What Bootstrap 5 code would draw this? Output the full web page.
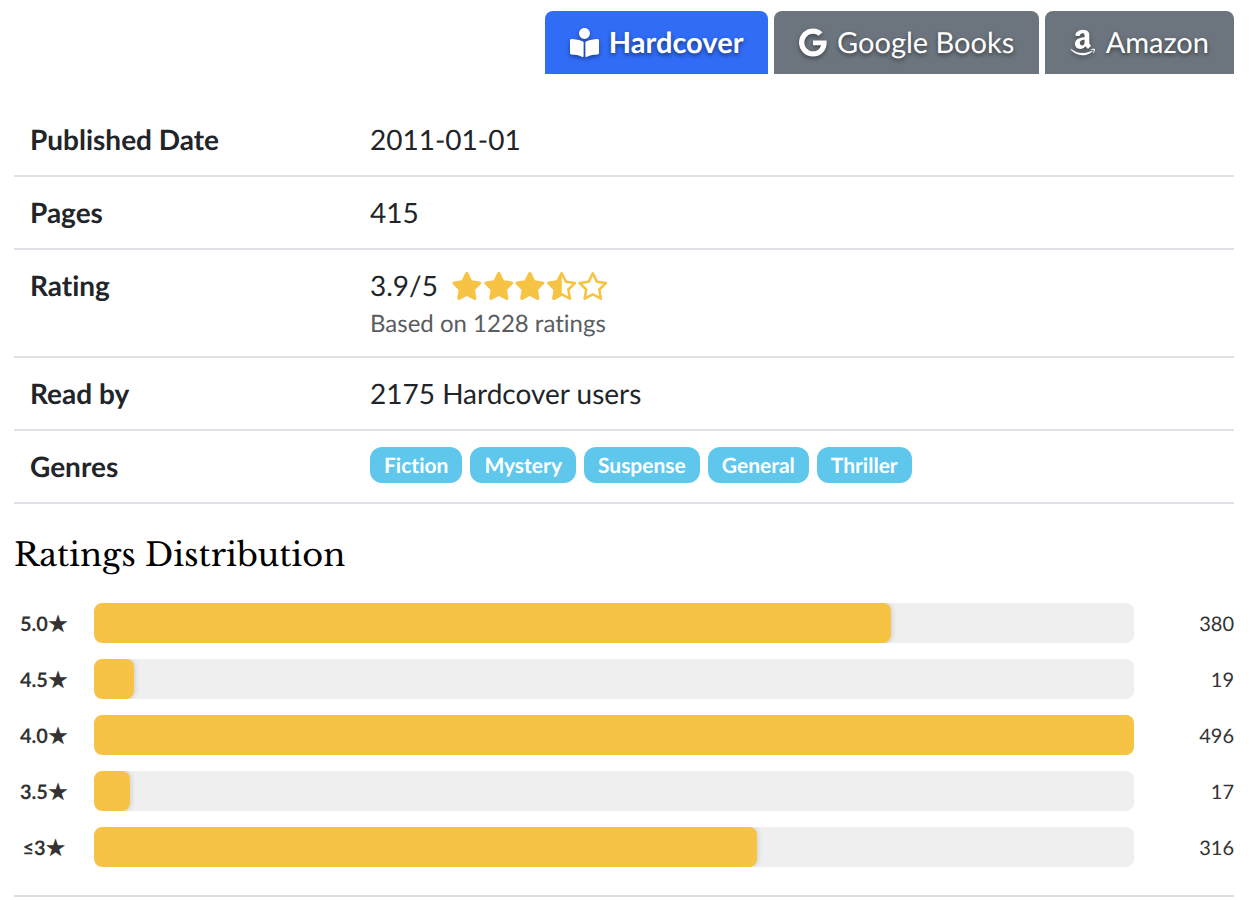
<!DOCTYPE html>
<html lang="en">
<head>
<meta charset="utf-8">
<meta name="viewport" content="width=device-width, initial-scale=1">
<title>Book details</title>
<link href="https://cdn.jsdelivr.net/npm/bootstrap@5.3.0/dist/css/bootstrap.min.css" rel="stylesheet">
<style>
  body { font-family: Lato, sans-serif; font-size: 28px; line-height: 39px; color: #212529; font-variant-ligatures: none; text-rendering: geometricPrecision; }
  .book-info { padding: 11px 22px 0 14px; }
  .source-tabs { gap: 6px; margin-bottom: 30px; }
  .source-tabs .nav-link {
    display: flex; align-items: center; gap: 10px;
    height: 63px; padding: 0 25px 1px;
    border-radius: 8px 8px 0 0;
    background: #6c757d; color: #fff; font-size: 29px;
    text-shadow: 0 2px 4px rgba(0,0,0,.5);
  }
  .source-tabs .nav-link.active { background: #306cf6; font-weight: 700; }
  .source-tabs svg { height: 29px; fill: #fff; filter: drop-shadow(0 2px 2px rgba(0,0,0,.4)); }
  .details-table > tbody > tr > * { padding: 16px; border-bottom: 2px solid #dee2e6; font-weight: 400; }
  .details-table > tbody > tr > th { width: 340px; font-weight: 700; }
  .star-icons { width: 158px; margin-left: 13px; }
  .star-icons svg { flex: 1 1 0; min-width: 0; height: 28px; fill: #f6c344; }
  .rating-note { font-size: 24px; line-height: 33px; padding-top: 2px; color: #5a5d60; }
  .genre-tag { background: #5fc7ec; font-size: 21px; line-height: 34px; padding: 2px 14px 0; border-radius: 12px; }
  .dist-title { font-family: "Libre Baskerville", "Liberation Serif", serif; font-size: 32px; font-weight: 400; line-height: 46px; color: #000; margin: 28px 0 25px; }
  .dist-row { height: 40px; gap: 20px; font-size: 20px; color: #333; }
  .dist-label { width: 60px; font-weight: 700; font-family: Lato, "Noto Sans CJK JP", sans-serif; line-height: 38px; padding-top: 2px; }
  .dist-track { height: 40px; border-radius: 8px; background: #efefef; }
  .dist-fill { height: 40px; border-radius: 8px; background: #f6c344; box-shadow: 2px 0 4px rgba(0,0,0,.1); }
  .dist-count { width: 80px; line-height: 38px; padding-top: 2px; }
  .section-rule { margin: 28px 0 0; border-top: 2px solid #ddd; opacity: 1; }
</style>
</head>
<body>
<svg class="d-none" aria-hidden="true">
  <symbol id="star-full" viewBox="0 0 576 512"><path d="M316.9 18C311.6 7 300.4 0 288.1 0s-23.4 7-28.8 18L195 150.3 51.4 171.5c-12 1.8-22 10.2-25.7 21.7s-.7 24.2 7.9 32.7L137.8 329 113.2 474.7c-2 12 3 24.2 12.9 31.3s23 8 33.8 2.3l128.3-68.5 128.3 68.5c10.8 5.7 23.9 4.9 33.8-2.3s14.9-19.3 12.9-31.3L438.5 329 542.7 225.9c8.6-8.5 11.7-21.2 7.9-32.7s-13.7-19.9-25.7-21.7L381.2 150.3 316.9 18z"/></symbol>
  <symbol id="star-empty" viewBox="0 0 576 512"><path d="M287.9 0c9.2 0 17.6 5.2 21.6 13.5l68.6 141.3 153.2 22.6c9 1.3 16.5 7.6 19.3 16.3s.5 18.1-5.9 24.5L433.6 328.4l26.2 155.6c1.5 9-2.2 18.1-9.6 23.5s-17.3 6-25.3 1.7l-137-73.2L151 509.1c-8.1 4.3-17.9 3.7-25.3-1.7s-11.2-14.5-9.7-23.5l26.2-155.6L31.1 218.2c-6.5-6.4-8.7-15.9-5.9-24.5s10.3-14.9 19.3-16.3l153.2-22.6L266.3 13.5C270.4 5.2 278.7 0 287.9 0zm0 79L235.4 187.2c-3.5 7.1-10.2 12.1-18.1 13.3L99 217.9 184.9 303c5.5 5.5 8.1 13.3 6.8 21L171.4 443.7l105.2-56.2c7.1-3.8 15.6-3.8 22.6 0l105.2 56.2L384.2 324.1c-1.3-7.7 1.2-15.5 6.8-21l85.9-85.1L358.6 200.5c-7.8-1.2-14.6-6.1-18.1-13.3L287.9 79z"/></symbol>
  <symbol id="star-left" viewBox="0 0 288 512"><path d="M316.9 18C311.6 7 300.4 0 288.1 0s-23.4 7-28.8 18L195 150.3 51.4 171.5c-12 1.8-22 10.2-25.7 21.7s-.7 24.2 7.9 32.7L137.8 329 113.2 474.7c-2 12 3 24.2 12.9 31.3s23 8 33.8 2.3l128.3-68.5z"/></symbol>
</svg>
<main class="book-info">
  <ul class="nav source-tabs justify-content-end">
    <li class="nav-item"><a class="nav-link active" href="#hardcover" aria-current="page">
      <svg viewBox="0 0 512 512" aria-hidden="true"><path d="M352 96c0-53.02-42.98-96-96-96s-96 42.98-96 96 42.98 96 96 96 96-42.98 96-96zM233.59 241.1c-59.33-36.32-155.43-46.3-203.79-49.05C13.55 191.13 0 203.51 0 219.14v222.8c0 14.33 11.59 26.28 26.49 27.05 43.66 2.29 131.99 10.68 193.04 41.43 9.37 4.72 20.48-1.71 20.48-11.87V252.56c-.01-4.67-2.32-8.95-6.42-11.46zm248.61-49.05c-48.35 2.74-144.46 12.73-203.78 49.05-4.1 2.51-6.41 6.96-6.41 11.63v245.79c0 10.19 11.14 16.63 20.54 11.9 61.04-30.72 149.32-39.11 192.97-41.4 14.9-.78 26.49-12.73 26.49-27.06V219.14c-.01-15.63-13.56-28.01-29.81-27.09z"/></svg>
      <span>Hardcover</span></a></li>
    <li class="nav-item"><a class="nav-link" href="#google">
      <svg viewBox="0 0 488 512" aria-hidden="true"><path d="M488 261.8C488 403.3 391.1 504 248 504 110.8 504 0 393.2 0 256S110.8 8 248 8c66.8 0 123 24.5 166.3 64.9l-67.5 64.9C258.5 52.6 94.3 116.6 94.3 256c0 86.5 69.1 156.6 153.7 156.6 98.2 0 135-70.4 140.8-106.9H248v-85.3h236.1c2.3 12.7 3.9 24.9 3.9 41.4z"/></svg>
      <span>Google Books</span></a></li>
    <li class="nav-item"><a class="nav-link" href="#amazon">
      <svg viewBox="0 0 448 512" aria-hidden="true"><path d="M257.2 162.7c-48.7 1.8-169.5 15.5-169.5 117.5 0 109.5 138.3 114 183.5 43.2 6.5 10.2 35.4 37.5 45.3 46.8l56.8-56S341 288.9 341 261.4V114.3C341 89 316.5 32 228.7 32 140.7 32 94 87 94 136.3l73.5 6.8c16.3-49.5 54.2-49.5 54.2-49.5 40.7-.1 35.5 29.8 35.5 69.1zm0 86.8c0 80-84.2 68-84.2 17.2 0-47.2 50.5-56.7 84.2-57.8v40.6zm136 163.5c-7.7 10-70 67-174.5 67S34.2 408.5 9.7 379c-6.8-7.7 1-11.3 5.5-8.3C88.5 415.2 203 488.5 387.7 401c7.5-3.7 13.3 2 5.5 12zm39.8 2.2c-6.5 15.8-16 26.8-21.2 31-5.5 4.5-9.5 2.7-6.5-3.8s19.3-46.5 12.7-55c-6.5-8.3-37-4.3-48-3.2-10.8 1-13 2-14-.3-2.3-5.7 21.7-15.5 37.5-17.5 15.7-1.8 41-.8 46 5.7 3.7 5.1 0 27.1-6.5 43.1z"/></svg>
      <span>Amazon</span></a></li>
  </ul>

  <table class="table details-table mb-0">
    <tbody>
      <tr><th scope="row">Published Date</th><td>2011-01-01</td></tr>
      <tr><th scope="row">Pages</th><td>415</td></tr>
      <tr><th scope="row">Rating</th><td>
        <div class="d-flex align-items-center">3.9/5
          <span class="star-icons d-flex" role="img" aria-label="3.5 out of 5 stars">
            <svg viewBox="0 0 576 512"><use href="#star-full"/></svg><svg viewBox="0 0 576 512"><use href="#star-full"/></svg><svg viewBox="0 0 576 512"><use href="#star-full"/></svg><svg viewBox="0 0 576 512"><use href="#star-empty"/><use href="#star-left" width="288" height="512"/></svg><svg viewBox="0 0 576 512"><use href="#star-empty"/></svg>
          </span>
        </div>
        <div class="rating-note">Based on 1228 ratings</div></td></tr>
      <tr><th scope="row">Read by</th><td>2175 Hardcover users</td></tr>
      <tr><th scope="row">Genres</th><td><div class="d-flex flex-wrap gap-2">
        <span class="badge genre-tag">Fiction</span><span class="badge genre-tag">Mystery</span><span class="badge genre-tag">Suspense</span><span class="badge genre-tag">General</span><span class="badge genre-tag">Thriller</span>
      </div></td></tr>
    </tbody>
  </table>

  <section>
    <h2 class="dist-title">Ratings Distribution</h2>
    <div class="d-flex flex-column gap-3">
      <div class="dist-row d-flex align-items-center"><span class="dist-label text-center">5.0★</span><div class="dist-track flex-grow-1 overflow-hidden"><div class="dist-fill" style="width:76.61%"></div></div><span class="dist-count text-end">380</span></div>
      <div class="dist-row d-flex align-items-center"><span class="dist-label text-center">4.5★</span><div class="dist-track flex-grow-1 overflow-hidden"><div class="dist-fill" style="width:3.83%"></div></div><span class="dist-count text-end">19</span></div>
      <div class="dist-row d-flex align-items-center"><span class="dist-label text-center">4.0★</span><div class="dist-track flex-grow-1 overflow-hidden"><div class="dist-fill" style="width:100%"></div></div><span class="dist-count text-end">496</span></div>
      <div class="dist-row d-flex align-items-center"><span class="dist-label text-center">3.5★</span><div class="dist-track flex-grow-1 overflow-hidden"><div class="dist-fill" style="width:3.43%"></div></div><span class="dist-count text-end">17</span></div>
      <div class="dist-row d-flex align-items-center"><span class="dist-label text-center">≤3★</span><div class="dist-track flex-grow-1 overflow-hidden"><div class="dist-fill" style="width:63.71%"></div></div><span class="dist-count text-end">316</span></div>
    </div>
  </section>
  <hr class="section-rule">
</main>
<script src="https://cdn.jsdelivr.net/npm/bootstrap@5.3.0/dist/js/bootstrap.bundle.min.js"></script>
</body>
</html>
